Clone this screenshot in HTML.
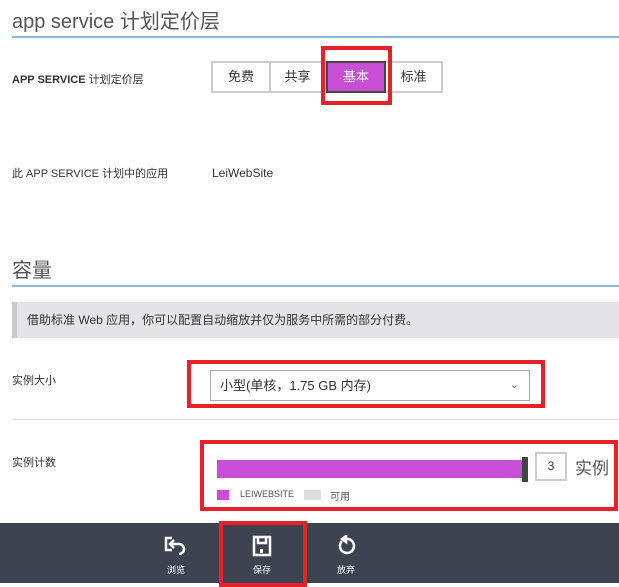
<!DOCTYPE html>
<html><head><meta charset="utf-8"><style>
*{margin:0;padding:0;box-sizing:border-box}
body{width:619px;height:583px;background:#fff;position:relative;overflow:hidden;font-family:"Liberation Sans","Noto Sans CJK SC",sans-serif;color:#333}
.a{position:absolute}
.h{font-size:20px;color:#555;left:12px}
.line{left:12px;right:0;height:2px;background:#8cb6dc}
.lbl{font-size:11px;left:12px;color:#333}
.red{border:4px solid #e8202a}
.btn{top:61px;height:32px;border:2px solid #ccc;font-size:13px;text-align:center;line-height:28px;background:#fff}
.ft{font-size:9px;color:#fff;text-align:center;width:40px}
</style></head><body>
<div class="a h" style="top:5px">app service 计划定价层</div>
<div class="a line" style="top:36px"></div>
<div class="a lbl" style="top:71px;font-weight:bold">APP SERVICE <span style="font-weight:normal">计划定价层</span></div>
<div class="a btn" style="left:211px;width:60px">免费</div>
<div class="a btn" style="left:269px;width:57px">共享</div>
<div class="a btn" style="left:384px;width:59px">标准</div>
<div class="a btn" style="left:326px;width:60px;background:#c64fd6;border-color:#444;color:#fff">基本</div>
<div class="a red" style="left:321px;top:46px;width:71px;height:59px"></div>
<div class="a lbl" style="top:165px">此 APP SERVICE 计划中的应用</div>
<div class="a" style="left:212px;top:166px;font-size:12px">LeiWebSite</div>
<div class="a h" style="top:254px">容量</div>
<div class="a line" style="top:285px"></div>
<div class="a" style="left:12px;right:0;top:302px;height:36px;background:#e4e4e6;border-left:5px solid #ccc;font-size:12px;line-height:36px;padding-left:10px">借助标准 Web 应用，你可以配置自动缩放并仅为服务中所需的部分付费。</div>
<div class="a lbl" style="top:372px">实例大小</div>
<div class="a" style="left:210px;top:370px;width:320px;height:31px;border:1px solid #aaa;font-size:13px;line-height:29px;padding-left:9px">小型(单核，1.75 GB 内存)<span style="position:absolute;right:10px;top:0;font-size:11px;color:#666">&#8964;</span></div>
<div class="a red" style="left:187px;top:360px;width:358px;height:48px"></div>
<div class="a" style="left:12px;right:0;top:419px;height:1px;background:#ddd"></div>
<div class="a lbl" style="top:454px">实例计数</div>
<div class="a" style="left:217px;top:460px;width:305px;height:18px;background:#c64fd6"></div>
<div class="a" style="left:522px;top:457px;width:6px;height:25px;background:#444"></div>
<div class="a" style="left:535px;top:452px;width:32px;height:29px;border:2px solid #ccc;font-size:12px;text-align:center;line-height:25px">3</div>
<div class="a" style="left:575px;top:454px;font-size:17px;color:#555">实例</div>
<div class="a" style="left:217px;top:490px;width:12px;height:10px;background:#c64fd6"></div>
<div class="a" style="left:240px;top:489px;font-size:9px;color:#555">LEIWEBSITE</div>
<div class="a" style="left:304px;top:490px;width:17px;height:10px;background:#ddd"></div>
<div class="a" style="left:330px;top:488px;font-size:10px;color:#555">可用</div>
<div class="a red" style="left:200px;top:440px;width:418px;height:71px"></div>
<div class="a" style="left:0;right:0;top:523px;bottom:0;background:#3d4350"></div>
<svg class="a" style="left:163px;top:535px" width="26" height="20" viewBox="0 0 26 20" fill="none" stroke="#fff" stroke-width="2.5"><path d="M9 3H3V15H9"/><path d="M11 5L7 9L11 13"/><path d="M7 9H16A5 5 0 0 1 16 19"/></svg>
<div class="a ft" style="left:156px;top:563px">浏览</div>
<svg class="a" style="left:252px;top:535px" width="20" height="22" viewBox="0 0 20 22" fill="none" stroke="#fff" stroke-width="2.5"><path d="M2 2H18V20H2Z"/><path d="M6 2V8H14V2"/><rect x="8" y="14" width="3" height="4" fill="#fff" stroke="none"/></svg>
<div class="a ft" style="left:242px;top:563px">保存</div>
<div class="a red" style="left:219px;top:521px;width:88px;height:66px"></div>
<svg class="a" style="left:336px;top:535px" width="20" height="22" viewBox="0 0 20 22" fill="none" stroke="#fff" stroke-width="2.5"><path d="M6 6A7 7 0 1 0 10 4"/><path d="M10 1V7L6 4Z" fill="#fff"/></svg>
<div class="a ft" style="left:326px;top:563px">放弃</div>
</body></html>
